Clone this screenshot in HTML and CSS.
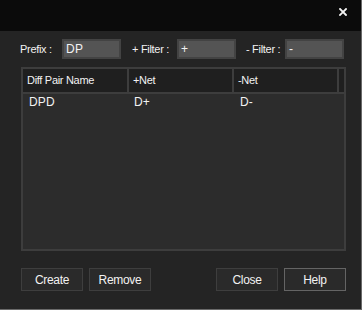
FILE: index.html
```html
<!DOCTYPE html>
<html>
<head>
<meta charset="utf-8">
<link rel="stylesheet" href="styles.css">
</head>
<body>
<div class="window">
  <div class="titlebar">
    <svg class="close" width="8" height="8" viewBox="0 0 8 8">
      <path d="M1 1 L7 7 M7 1 L1 7" stroke="#f4f4f4" stroke-width="1.8" stroke-linecap="square"/>
    </svg>
  </div>
  <div class="content">
    <div class="filters">
      <span class="label l1">Prefix :</span>
      <div class="input">DP</div>
      <span class="label l2">+ Filter :</span>
      <div class="input">+</div>
      <span class="label l3">- Filter :</span>
      <div class="input">-</div>
    </div>
    <div class="table">
      <div class="thead">
        <div class="th c1">Diff Pair Name</div>
        <div class="th c2">+Net</div>
        <div class="th c3">-Net</div>
        <div class="th c4"></div>
      </div>
      <div class="tbody">
        <div class="tr">
          <div class="td c1">DPD</div>
          <div class="td c2">D+</div>
          <div class="td c3">D-</div>
        </div>
      </div>
    </div>
    <div class="buttons">
      <button class="btn">Create</button>
      <button class="btn">Remove</button>
      <div class="spacer"></div>
      <button class="btn">Close</button>
      <button class="btn default">Help</button>
    </div>
  </div>
</div>
</body>
</html>
```

FILE: styles.css
```css
html, body {
  margin: 0;
  padding: 0;
  background: #242424;
}
.window {
  width: 362px;
  height: 310px;
  box-sizing: border-box;
  background: #242424;
  border-right: 1px solid #6a6a6a;
  border-bottom: 1px solid #6a6a6a;
  font-family: "Liberation Sans", Arial, sans-serif;
  font-size: 11px;
  letter-spacing: -0.3px;
  color: #f2f2f2;
  display: flex;
  flex-direction: column;
}
.titlebar {
  height: 31px;
  background: #0b0b0b;
  display: flex;
  justify-content: flex-end;
  align-items: flex-start;
  padding-top: 8px;
  padding-right: 14px;
  box-sizing: border-box;
}
.close {
  display: block;
}
.content {
  padding: 8px 0 0 20px;
  display: flex;
  flex-direction: column;
}
.filters {
  display: flex;
  align-items: center;
  height: 20px;
}
.label {
  white-space: nowrap;
}
.l1 { width: 42px; }
.l2 { width: 45px; margin-left: 11px; }
.l3 { width: 39px; margin-left: 10px; }
.input {
  width: 59px;
  height: 20px;
  box-sizing: border-box;
  border: 2px solid #434343;
  background: #545454;
  padding-left: 2px;
  line-height: 16px;
  font-size: 12px;
  letter-spacing: 0.3px;
}
.table {
  margin-top: 8px;
  margin-left: 1px;
  width: 325px;
  height: 184px;
  box-sizing: border-box;
  border: 2px solid #3d3d3d;
  background: #2c2c2c;
  display: flex;
  flex-direction: column;
}
.thead {
  display: flex;
  height: 25px;
  box-sizing: border-box;
  border-bottom: 2px solid #3d3d3d;
  background: #1f1f1f;
}
.th {
  box-sizing: border-box;
  border-right: 2px solid #3d3d3d;
  padding-left: 4px;
  line-height: 23px;
  white-space: nowrap;
}
.c1 { width: 106px; }
.c2 { width: 105px; }
.c3 { width: 105px; }
.th.c4 { width: 5px; border-right: none; padding: 0; }
.tr {
  display: flex;
  height: 16px;
}
.td {
  box-sizing: border-box;
  padding-left: 6px;
  line-height: 16px;
  font-size: 12px;
  letter-spacing: 0.2px;
}
.td.c2 { padding-left: 5px; }
.buttons {
  margin-top: 17px;
  margin-left: 1px;
  width: 325px;
  display: flex;
  gap: 6px;
}
.spacer {
  flex: 1;
}
.btn {
  width: 62px;
  height: 23px;
  box-sizing: border-box;
  background: #2a2a2a;
  border: 1px solid #3e3e3e;
  color: #f2f2f2;
  font-family: "Liberation Sans", Arial, sans-serif;
  font-size: 12px;
  letter-spacing: -0.3px;
  padding: 0;
  margin: 0;
}
.btn.default {
  border-color: #646464;
}
```
